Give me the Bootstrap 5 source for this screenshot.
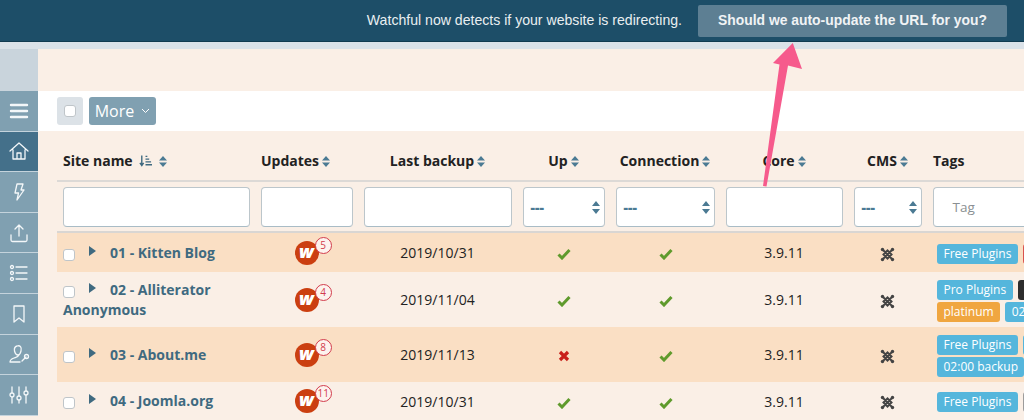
<!DOCTYPE html>
<html lang="en">
<head>
<meta charset="utf-8">
<title>Watchful</title>
<link href="https://cdn.jsdelivr.net/npm/bootstrap@5.3.0/dist/css/bootstrap.min.css" rel="stylesheet">
<style>
html,body{height:420px;overflow:hidden}
body{background:#faefe6;font-family:"Open Sans",sans-serif;color:#222;position:relative}
.topstrip{height:42px;background:#1d4e68;border-bottom:1px solid #123b50;font-family:"Liberation Sans",sans-serif;color:#e9eef1;font-size:14.1px;padding-right:17px;gap:16px}
.topact{background:#5d7f93;color:#f0f3f5;font-weight:700;font-size:13.9px;width:309px;height:32px;border-radius:2px;border:0;padding:0}
.greystrip{height:7px;background:#dbe2e8}
.shell{height:371px}
.rail{width:38px;flex:none}
.railtop{height:42px;background:#c9d4dc}
.railitem{height:40.6px;background:#80a0b1;border-bottom:1px solid #c4d3dc;width:38px;color:#fff}
.railitem.on{background:#44708a}
.railitem svg{width:22px;height:22px;fill:none;stroke:#f3f7f9;stroke-width:1.3;stroke-linecap:round;stroke-linejoin:round}
.mainpane{min-width:0;overflow:hidden;flex:1}
.blankhead{height:42px}
.toolrow{height:40px;background:#fff;padding-left:19px;gap:6px}
.checkbtn{width:26px;height:28px;background:#dce2e7;border-radius:3px}
.fakecheck{width:12px;height:12px;background:#fff;border:1px solid #bfc5c9;border-radius:3px;display:block}
.morebtn{height:28px;width:67px;background:#80a0b1;color:#fff;font-size:16px;border-radius:3px;border:0;padding:0;gap:7px}
.tablewrap{padding-left:19px;width:986px;overflow:hidden}
table.sites{table-layout:fixed;width:1000px;margin:0;border-collapse:collapse;--bs-table-bg:transparent}
table.sites th,table.sites td{border:0;padding:0;background:transparent;color:#222;vertical-align:middle;box-shadow:none}
.headrow th{height:50px;font-size:14px;font-weight:700;color:#111;text-align:center;border-bottom:2px solid #dcd9d6!important;padding-top:9px!important}
.headrow th.lft{text-align:left;padding-left:6px!important}
.filterrow td{height:51px;padding:0 5.5px!important;border-bottom:2px solid #d9d6d3!important}
.filterbox{display:flex;align-items:center;height:40px;background:#fff;border:1px solid #bcc6cb;border-bottom-color:#a9bcc6;border-radius:4px;width:100%;padding:2px 7px 0;position:relative;color:#4b7a93;font-weight:800;font-size:14px}
.filterbox.taginput{color:#8a8f92;font-weight:400;font-size:13.5px;padding:2px 0 0 19px;border-radius:4px 0 0 4px;border-right:0}
.selarrow{position:absolute;right:4px;top:13px}
.sorter{display:inline-block;vertical-align:-1px;margin-left:3px}
.siterow td{font-size:14px;text-align:center}
.siterow td>svg{vertical-align:middle}
.siterow.peach td{background:#fadfc4}
.r1 td{height:40px}.r2 td,.r3 td{height:55px}.r4 td{height:38px}
.namecell{text-align:left!important;padding:0 6px!important;font-weight:700;color:#3f6a80!important;line-height:20px}
.namecell a{color:#3f6a80;text-decoration:none}
.rowcheck{display:inline-block;width:12px;height:12px;background:#fff;border:1px solid #bfc5c9;border-radius:3px;vertical-align:-3px;margin-right:14px}
.siterow td>svg.caretmark{display:inline-block;vertical-align:2px;margin-right:14px}
.connectcell{padding-left:2px!important}
.wsign{width:24px;height:24px;border-radius:50%;background:#cb3f10;color:#fff;font-weight:800;font-style:italic;font-size:18px;line-height:20px;display:inline-block;position:relative;text-align:center;vertical-align:middle}
.wcount{position:absolute;left:20px;top:-4px;min-width:17px;height:17px;padding:0 2px;border-radius:9px;background:#fdf3ee;border:1px solid #d23c4c;color:#d23c4c;font-size:10px;font-style:normal;font-weight:400;line-height:15px}
.tagcell{text-align:left!important;padding:0 6px 0 10px!important;overflow:hidden;line-height:22px;white-space:nowrap}
.tagchip{display:inline-block;height:20px;line-height:20px;padding:0 6.5px;border-radius:3px;color:#fff;background:#55b6dc;font-size:12px;margin-right:5px;vertical-align:middle}
.tagchip.dark{background:#2d2d2d;width:30px}.tagchip.amber{background:#f0a640}.tagchip.red{background:#d9534f;width:30px}.tagchip.grey{background:#9c9c9c;width:30px}.tagchip.blank{width:30px}
.tagcell .tagline{display:block;height:22px}
.pointer{position:absolute;left:760px;top:40px;width:46px;height:150px;z-index:5;pointer-events:none}
</style>
</head>
<body>
<div class="topstrip d-flex align-items-center justify-content-end">
  <span>Watchful now detects if your website is redirecting.</span>
  <button class="topact" type="button">Should we auto-update the URL for you?</button>
</div>
<div class="greystrip"></div>
<div class="shell d-flex">
  <nav class="rail d-flex flex-column">
    <div class="railtop"></div>
    <div class="railitem d-flex align-items-center justify-content-center"><svg viewBox="0 0 22 22" style="stroke-width:2.4"><path d="M3 5h16M3 11h16M3 17h16"/></svg></div>
    <div class="railitem on d-flex align-items-center justify-content-center"><svg viewBox="0 0 22 22"><path d="M2 11 11 3l9 8M5 10v9h12v-9M9 19v-6h4v6"/></svg></div>
    <div class="railitem d-flex align-items-center justify-content-center"><svg viewBox="0 0 22 22"><path d="M9 3h6l-2 6h3l-7 10 1.500-7H7z"/></svg></div>
    <div class="railitem d-flex align-items-center justify-content-center"><svg viewBox="0 0 22 22"><path d="M11 14V3M7 7l4-4 4 4M3 13v5a1.500 1.500 0 0 0 1.500 1.500h13A1.500 1.500 0 0 0 19 18v-5"/></svg></div>
    <div class="railitem d-flex align-items-center justify-content-center"><svg viewBox="0 0 22 22"><circle cx="4" cy="5" r="1.500"/><circle cx="4" cy="11" r="1.500"/><circle cx="4" cy="17" r="1.500"/><path d="M8 5h11M8 11h11M8 17h11"/></svg></div>
    <div class="railitem d-flex align-items-center justify-content-center"><svg viewBox="0 0 22 22"><path d="M6 3h10v16l-5-4-5 4z"/></svg></div>
    <div class="railitem d-flex align-items-center justify-content-center"><svg viewBox="0 0 22 22"><path d="M11 12c-1 2-2 2-5 3-3 1-4 2-4 4h10M9 3c3-1 5 1 4 5-.5 2-1.500 4-3 4S7 10 6.500 8C6 5 7 3.500 9 3zM14 18l4-4"/><circle cx="18.500" cy="13.500" r="2"/></svg></div>
    <div class="railitem d-flex align-items-center justify-content-center"><svg viewBox="0 0 22 22"><path d="M4 3v16M11 3v16M18 3v16"/><circle cx="4" cy="11" r="2" fill="#80a0b1"/><circle cx="11" cy="14" r="2" fill="#80a0b1"/><circle cx="18" cy="9" r="2" fill="#80a0b1"/></svg></div>
  </nav>
  <main class="mainpane">
    <div class="blankhead"></div>
    <div class="toolrow d-flex align-items-center">
      <span class="checkbtn d-flex align-items-center justify-content-center"><span class="fakecheck"></span></span>
      <button class="morebtn d-flex align-items-center justify-content-center" type="button">More <svg width="9" height="6" viewBox="0 0 9 6" fill="none" stroke="#fff" stroke-width="1"><path d="M1 1l3.500 3.500L8 1"/></svg></button>
    </div>
    <div class="tablewrap">
      <table class="table sites">
        <colgroup><col style="width:198px"><col style="width:103px"><col style="width:159px"><col style="width:93px"><col style="width:110px"><col style="width:128px"><col style="width:79px"><col style="width:130px"></colgroup>
        <thead>
          <tr class="headrow">
            <th class="lft">Site name <svg class="sorter" width="13" height="13" viewBox="0 0 14 13" fill="none" stroke="#3f6a80" stroke-width="1.500"><path d="M3 1v10M1 9l2 3 2-3M7 2h2M7 5h4M7 8h6M7 11h7"/></svg> <svg class="sorter" width="8" height="11" viewBox="0 0 8 11" fill="#4b7a93"><path d="M4 0l4 4.500H0zM4 11L0 6.500h8z"/></svg></th>
            <th class="lft">Updates<svg class="sorter" width="8" height="11" viewBox="0 0 8 11" fill="#4b7a93"><path d="M4 0l4 4.500H0zM4 11L0 6.500h8z"/></svg></th>
            <th>Last backup<svg class="sorter" width="8" height="11" viewBox="0 0 8 11" fill="#4b7a93"><path d="M4 0l4 4.500H0zM4 11L0 6.500h8z"/></svg></th>
            <th>Up<svg class="sorter" width="8" height="11" viewBox="0 0 8 11" fill="#4b7a93"><path d="M4 0l4 4.500H0zM4 11L0 6.500h8z"/></svg></th>
            <th>Connection<svg class="sorter" width="8" height="11" viewBox="0 0 8 11" fill="#4b7a93"><path d="M4 0l4 4.500H0zM4 11L0 6.500h8z"/></svg></th>
            <th>Core<svg class="sorter" width="8" height="11" viewBox="0 0 8 11" fill="#4b7a93"><path d="M4 0l4 4.500H0zM4 11L0 6.500h8z"/></svg></th>
            <th>CMS<svg class="sorter" width="8" height="11" viewBox="0 0 8 11" fill="#4b7a93"><path d="M4 0l4 4.500H0zM4 11L0 6.500h8z"/></svg></th>
            <th class="lft">Tags</th>
          </tr>
        </thead>
        <tbody>
          <tr class="filterrow">
            <td><div class="filterbox"></div></td>
            <td><div class="filterbox"></div></td>
            <td><div class="filterbox"></div></td>
            <td><div class="filterbox">---<svg class="selarrow" width="8" height="13" viewBox="0 0 8 13" fill="#4b7a93"><path d="M4 0l4 5H0zM4 13L0 8h8z"/></svg></div></td>
            <td><div class="filterbox">---<svg class="selarrow" width="8" height="13" viewBox="0 0 8 13" fill="#4b7a93"><path d="M4 0l4 5H0zM4 13L0 8h8z"/></svg></div></td>
            <td><div class="filterbox"></div></td>
            <td><div class="filterbox">---<svg class="selarrow" width="8" height="13" viewBox="0 0 8 13" fill="#4b7a93"><path d="M4 0l4 5H0zM4 13L0 8h8z"/></svg></div></td>
            <td><div class="filterbox taginput">Tag</div></td>
          </tr>
          <tr class="siterow peach r1">
            <td class="namecell"><span class="rowcheck"></span><svg class="caretmark" width="7" height="10" viewBox="0 0 7 10" fill="#3f6a80"><path d="M0 0l7 5-7 5z"/></svg><a href="#">01 - Kitten Blog</a></td>
            <td><span class="wsign">w<span class="wcount">5</span></span></td>
            <td>2019/10/31</td>
            <td><svg width="14" height="12" viewBox="0 0 14 12" fill="none" stroke="#5f9a2c" stroke-width="3"><path d="M1.500 6.500 5 10l7.500-8"/></svg></td>
            <td class="connectcell"><svg width="14" height="12" viewBox="0 0 14 12" fill="none" stroke="#5f9a2c" stroke-width="3"><path d="M1.500 6.500 5 10l7.500-8"/></svg></td>
            <td>3.9.11</td>
            <td><svg width="15" height="15" viewBox="0 0 15 15" fill="none" stroke="#444" stroke-width="2"><path d="M3 3l9 9M12 3l-9 9M3.500 7.500 7.500 3.500l4 4-4 4z"/><circle cx="2.500" cy="2.500" r="1.700" fill="#444" stroke="none"/><circle cx="12.500" cy="2.500" r="1.700" fill="#444" stroke="none"/><circle cx="2.500" cy="12.500" r="1.700" fill="#444" stroke="none"/><circle cx="12.500" cy="12.500" r="1.700" fill="#444" stroke="none"/></svg></td>
            <td class="tagcell"><span class="tagchip">Free Plugins</span><span class="tagchip red"></span></td>
          </tr>
          <tr class="siterow r2">
            <td class="namecell"><span class="rowcheck"></span><svg class="caretmark" width="7" height="10" viewBox="0 0 7 10" fill="#3f6a80"><path d="M0 0l7 5-7 5z"/></svg><a href="#">02 - Alliterator Anonymous</a></td>
            <td><span class="wsign">w<span class="wcount">4</span></span></td>
            <td>2019/11/04</td>
            <td><svg width="14" height="12" viewBox="0 0 14 12" fill="none" stroke="#5f9a2c" stroke-width="3"><path d="M1.500 6.500 5 10l7.500-8"/></svg></td>
            <td class="connectcell"><svg width="14" height="12" viewBox="0 0 14 12" fill="none" stroke="#5f9a2c" stroke-width="3"><path d="M1.500 6.500 5 10l7.500-8"/></svg></td>
            <td>3.9.11</td>
            <td><svg width="15" height="15" viewBox="0 0 15 15" fill="none" stroke="#444" stroke-width="2"><path d="M3 3l9 9M12 3l-9 9M3.500 7.500 7.500 3.500l4 4-4 4z"/><circle cx="2.500" cy="2.500" r="1.700" fill="#444" stroke="none"/><circle cx="12.500" cy="2.500" r="1.700" fill="#444" stroke="none"/><circle cx="2.500" cy="12.500" r="1.700" fill="#444" stroke="none"/><circle cx="12.500" cy="12.500" r="1.700" fill="#444" stroke="none"/></svg></td>
            <td class="tagcell"><span class="tagline"><span class="tagchip">Pro Plugins</span><span class="tagchip dark"></span></span><span class="tagline"><span class="tagchip amber">platinum</span><span class="tagchip">02:00 backup</span></span></td>
          </tr>
          <tr class="siterow peach r3">
            <td class="namecell"><span class="rowcheck"></span><svg class="caretmark" width="7" height="10" viewBox="0 0 7 10" fill="#3f6a80"><path d="M0 0l7 5-7 5z"/></svg><a href="#">03 - About.me</a></td>
            <td><span class="wsign">w<span class="wcount">8</span></span></td>
            <td>2019/11/13</td>
            <td><svg width="12" height="12" viewBox="0 0 12 12" fill="none" stroke="#c9201b" stroke-width="3.200"><path d="M2 2l8 8M10 2l-8 8"/></svg></td>
            <td class="connectcell"><svg width="14" height="12" viewBox="0 0 14 12" fill="none" stroke="#5f9a2c" stroke-width="3"><path d="M1.500 6.500 5 10l7.500-8"/></svg></td>
            <td>3.9.11</td>
            <td><svg width="15" height="15" viewBox="0 0 15 15" fill="none" stroke="#444" stroke-width="2"><path d="M3 3l9 9M12 3l-9 9M3.500 7.500 7.500 3.500l4 4-4 4z"/><circle cx="2.500" cy="2.500" r="1.700" fill="#444" stroke="none"/><circle cx="12.500" cy="2.500" r="1.700" fill="#444" stroke="none"/><circle cx="2.500" cy="12.500" r="1.700" fill="#444" stroke="none"/><circle cx="12.500" cy="12.500" r="1.700" fill="#444" stroke="none"/></svg></td>
            <td class="tagcell"><span class="tagline"><span class="tagchip">Free Plugins</span><span class="tagchip blank"></span></span><span class="tagline"><span class="tagchip">02:00 backup</span></span></td>
          </tr>
          <tr class="siterow r4">
            <td class="namecell"><span class="rowcheck"></span><svg class="caretmark" width="7" height="10" viewBox="0 0 7 10" fill="#3f6a80"><path d="M0 0l7 5-7 5z"/></svg><a href="#">04 - Joomla.org</a></td>
            <td><span class="wsign">w<span class="wcount">11</span></span></td>
            <td>2019/10/31</td>
            <td><svg width="14" height="12" viewBox="0 0 14 12" fill="none" stroke="#5f9a2c" stroke-width="3"><path d="M1.500 6.500 5 10l7.500-8"/></svg></td>
            <td class="connectcell"><svg width="14" height="12" viewBox="0 0 14 12" fill="none" stroke="#5f9a2c" stroke-width="3"><path d="M1.500 6.500 5 10l7.500-8"/></svg></td>
            <td>3.9.11</td>
            <td><svg width="15" height="15" viewBox="0 0 15 15" fill="none" stroke="#444" stroke-width="2"><path d="M3 3l9 9M12 3l-9 9M3.500 7.500 7.500 3.500l4 4-4 4z"/><circle cx="2.500" cy="2.500" r="1.700" fill="#444" stroke="none"/><circle cx="12.500" cy="2.500" r="1.700" fill="#444" stroke="none"/><circle cx="2.500" cy="12.500" r="1.700" fill="#444" stroke="none"/><circle cx="12.500" cy="12.500" r="1.700" fill="#444" stroke="none"/></svg></td>
            <td class="tagcell"><span class="tagchip">Free Plugins</span><span class="tagchip grey"></span></td>
          </tr>
        </tbody>
      </table>
    </div>
  </main>
</div>
<svg class="pointer" viewBox="760 40 46 150"><path d="M792.800 43 802 69 788 65.500 766.500 186.500 763 186 779.500 64.500 773 63z" fill="#f65a8c"/></svg>
<script src="https://cdn.jsdelivr.net/npm/bootstrap@5.3.0/dist/js/bootstrap.bundle.min.js"></script>
</body>
</html>
